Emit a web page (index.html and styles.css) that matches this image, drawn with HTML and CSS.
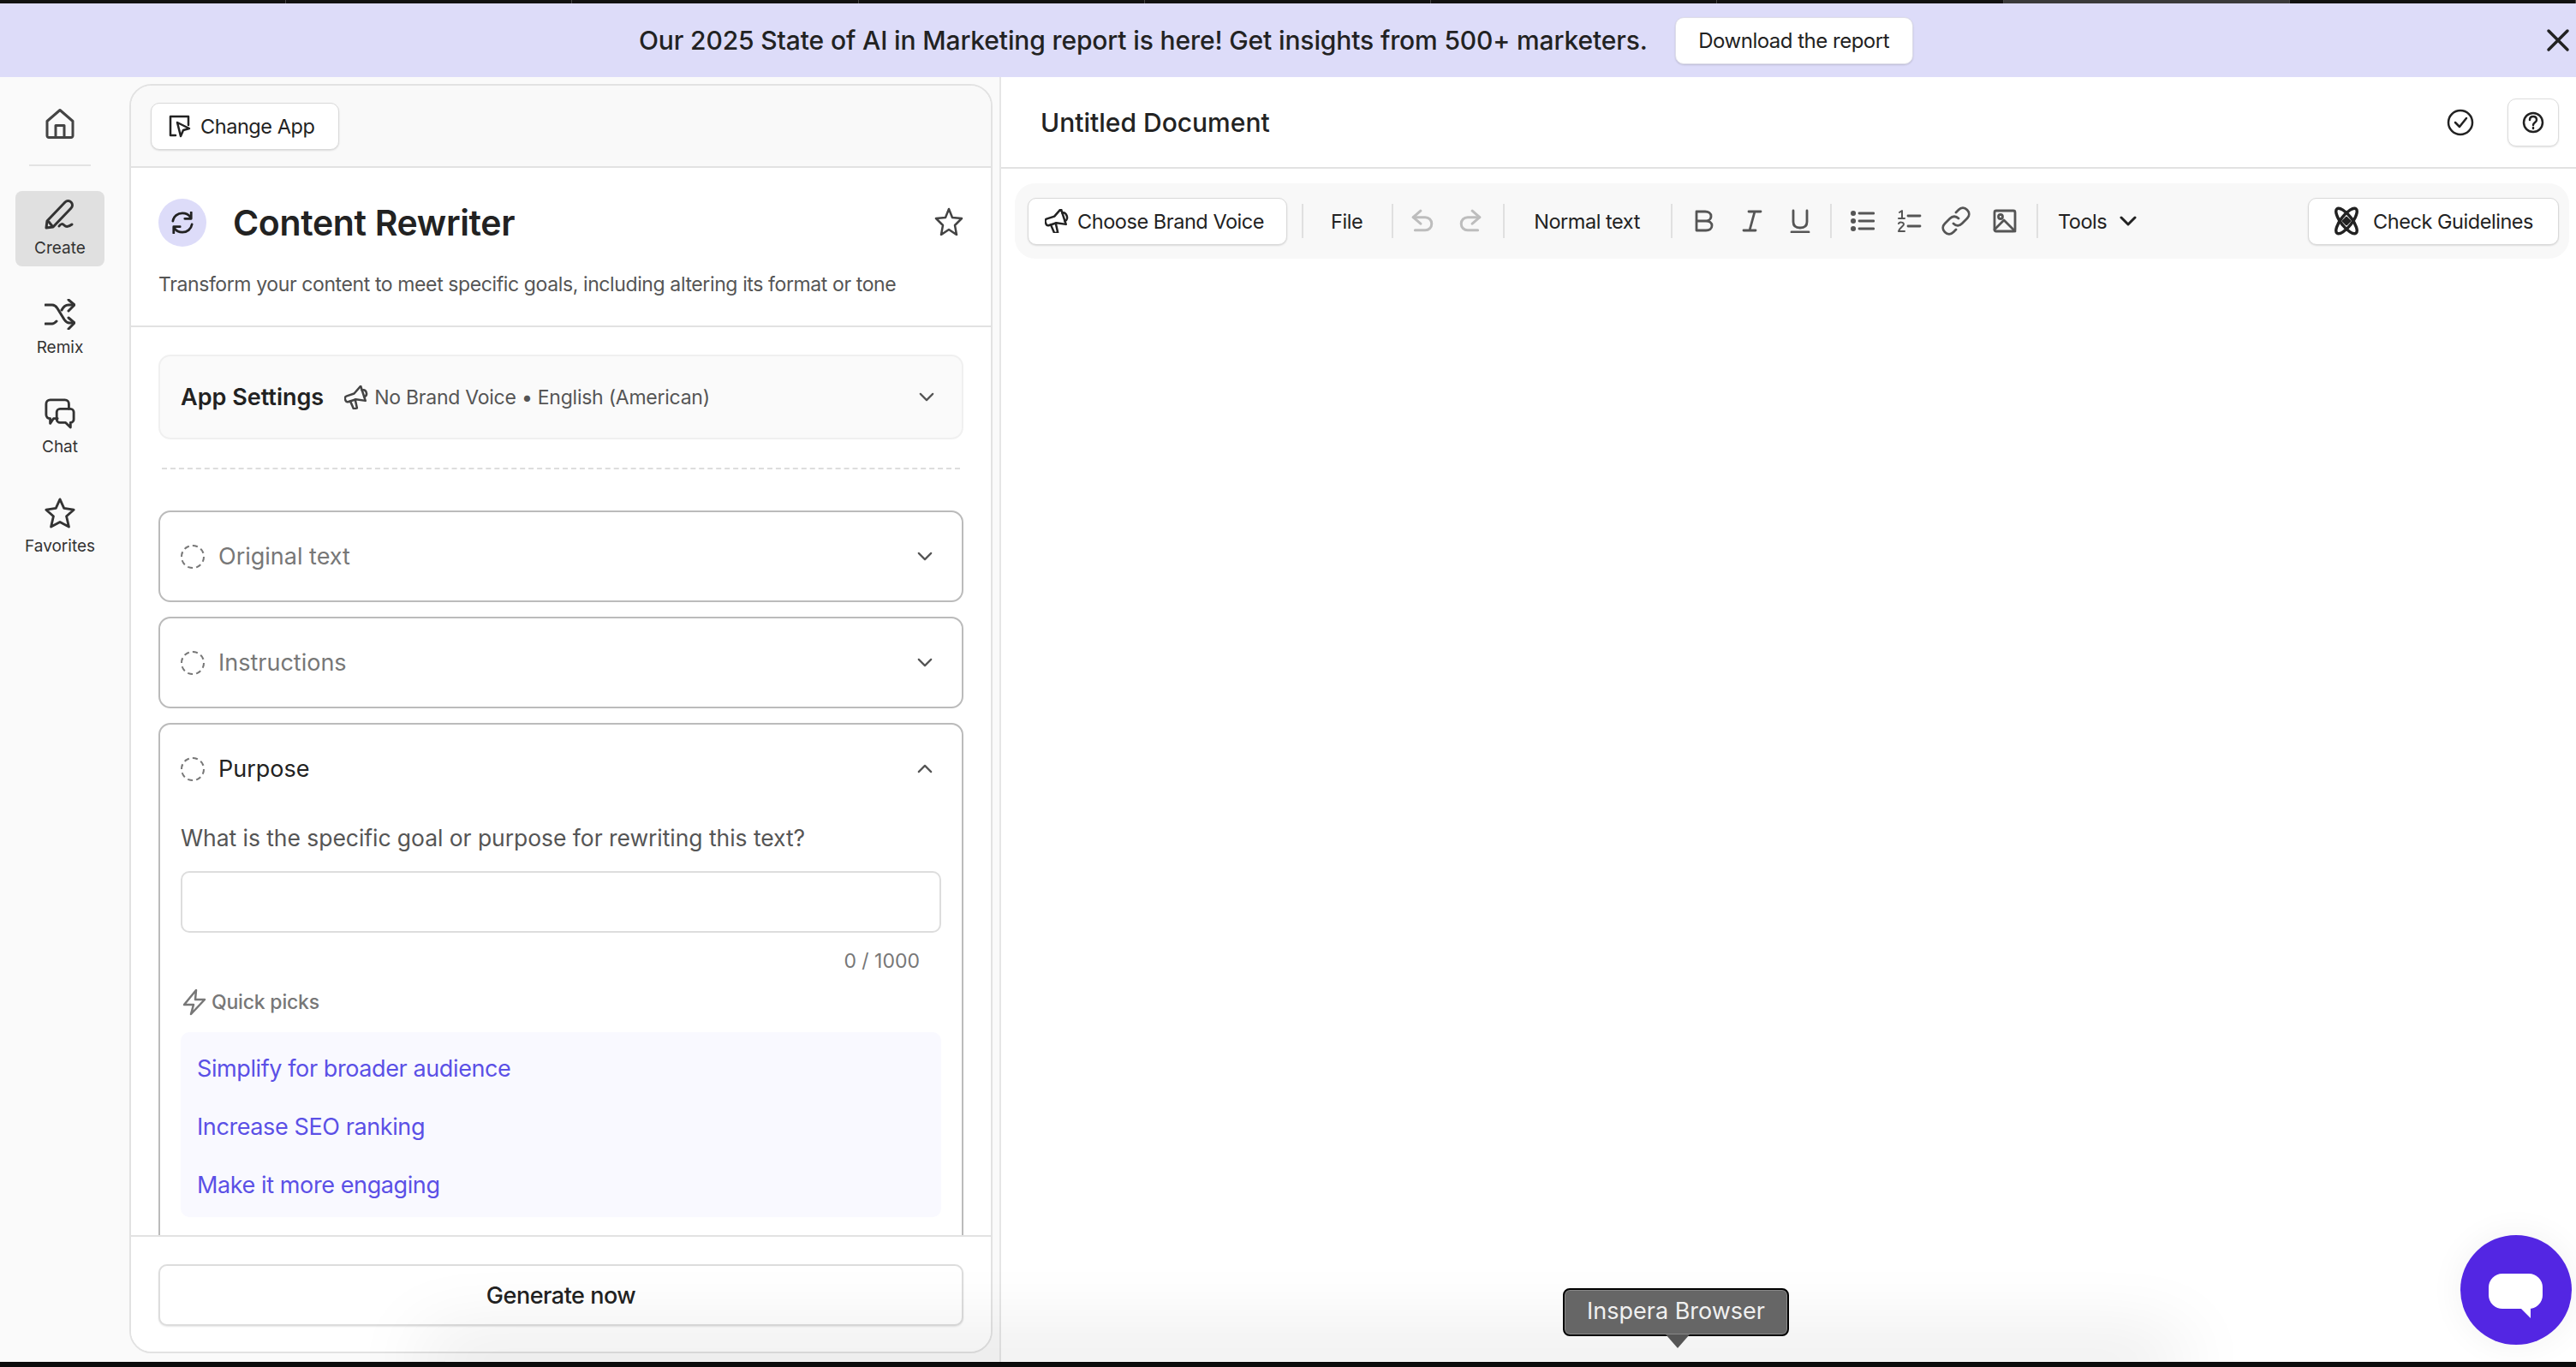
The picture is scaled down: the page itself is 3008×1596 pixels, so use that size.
FILE: index.html
```html
<!DOCTYPE html>
<html lang="en">
<head>
    <meta charset="UTF-8">
    <title>Content Rewriter</title>
    <link rel="stylesheet" href="styles.css">
</head>
<body>
    <div class="tabstrip">
        <span></span><span></span><span></span><span></span><span></span><span></span><span></span><span class="active"></span><span></span>
    </div>

    <div class="banner">
        <span class="banner-text">Our 2025 State of AI in Marketing report is here! Get insights from 500+ marketers.</span>
        <button class="banner-btn">Download the report</button>
        <svg class="banner-close" viewBox="0 0 28 28"><path d="M3 3l22 22M25 3L3 25"/></svg>
    </div>

    <div class="main">
        <!-- Left nav -->
        <nav class="sidebar">
            <svg class="nav-home" viewBox="0 0 34 36"><path d="M2 15L17 2l15 13v17c0 1-1 2-2 2H4c-1 0-2-1-2-2z"/><path d="M12 34V20h10v14"/></svg>
            <div class="nav-line"></div>
            <div class="nav-item selected">
                <svg viewBox="0 0 36 36"><path d="M2 33l1-8L24 3c2-2 5-2 7 0s2 5 0 7L10 32z"/><path d="M5 26l4 5"/><path d="M17 31c2-3 4-3 6-1s5 2 9-1"/></svg>
                <span>Create</span>
            </div>
            <div class="nav-item">
                <svg viewBox="0 0 36 36"><path d="M1 7h8c3 0 4 1 6 4l8 13c2 3 3 4 6 4h5"/><path d="M1 29h8c2 0 3-1 5-3M20 13c2-4 4-6 8-6h6"/><path d="M28 1l7 6-7 7M28 22l7 6-7 7"/></svg>
                <span>Remix</span>
            </div>
            <div class="nav-item">
                <svg viewBox="0 0 38 38"><path d="M16 25H11l-4 6v-6c-3 0-5-2-5-5V7c0-3 2-5 5-5h18c3 0 5 2 5 5v6"/><path d="M19 13h13c2 0 4 2 4 4v9c0 2-2 4-4 4v6l-6-6h-7c-2 0-4-2-4-4v-9c0-2 2-4 4-4z"/></svg>
                <span>Chat</span>
            </div>
            <div class="nav-item">
                <svg viewBox="0 0 38 38"><path d="M19 2l5 11 12 2-9 8 3 13-11-6-11 6 3-13-9-8 12-2z"/></svg>
                <span>Favorites</span>
            </div>
        </nav>

        <!-- App panel -->
        <section class="panel">
            <div class="panel-top">
                <button class="white-btn change-btn">
                    <svg class="icon" viewBox="0 0 28 28"><path d="M9 25H3V3h21v10"/><path d="M11 10l14 7-7 2-3 7z"/></svg>
                    Change App
                </button>
            </div>
            <div class="app-head">
                <div class="title-row">
                    <div class="app-icon">
                        <svg viewBox="0 0 28 28"><path d="M2 12C3 6 8 2 14 2c5 0 8 2 10 5"/><path d="M26 16c-1 6-6 10-12 10-5 0-8-2-10-5"/><path d="M25 1v8h-8M3 27v-8h8"/></svg>
                    </div>
                    <h1>Content Rewriter</h1>
                    <svg class="star" viewBox="0 0 34 34"><path d="M17 3l4 10 11 1-8 8 2 11-9-6-9 6 2-11-8-8 11-1z"/></svg>
                </div>
                <p class="app-desc">Transform your content to meet specific goals, including altering its format or tone</p>
            </div>
            <div class="panel-scroll">
                <div class="settings">
                    <b>App Settings</b>
                    <svg class="icon mega" viewBox="0 0 28 28"><g transform="rotate(-18 14 14)"><path d="M4 9h9l10-6v18l-10-5H4c-2 0-3-1-3-3v-1c0-2 1-3 3-3z"/><path d="M6 16l1 10h4l1-10M23 8c3 0 4 2 4 4s-1 4-4 4"/></g></svg>
                    <span class="settings-meta">No Brand Voice • English (American)</span>
                    <svg class="chev" viewBox="0 0 20 12"><path d="M2 2l8 8 8-8"/></svg>
                </div>
                <div class="dashed"></div>

                <div class="card">
                    <div class="card-head muted">
                        <span class="ring"></span>
                        <span class="card-title">Original text</span>
                        <svg class="chev" viewBox="0 0 20 12"><path d="M2 2l8 8 8-8"/></svg>
                    </div>
                </div>
                <div class="card">
                    <div class="card-head muted">
                        <span class="ring"></span>
                        <span class="card-title">Instructions</span>
                        <svg class="chev" viewBox="0 0 20 12"><path d="M2 2l8 8 8-8"/></svg>
                    </div>
                </div>
                <div class="card open">
                    <div class="card-head">
                        <span class="ring"></span>
                        <span class="card-title">Purpose</span>
                        <svg class="chev" viewBox="0 0 20 12"><path d="M2 10l8-8 8 8"/></svg>
                    </div>
                    <div class="question">What is the specific goal or purpose for rewriting this text?</div>
                    <input class="answer" type="text">
                    <div class="counter">0 / 1000</div>
                    <div class="quick-label">
                        <svg viewBox="0 0 28 32"><path d="M16 2L2 19h11l-3 11 16-17H15z"/></svg>
                        Quick picks
                    </div>
                    <div class="picks">
                        <a>Simplify for broader audience</a>
                        <a>Increase SEO ranking</a>
                        <a>Make it more engaging</a>
                    </div>
                </div>
            </div>
            <div class="panel-foot">
                <button class="generate">Generate now</button>
            </div>
        </section>

        <!-- Document -->
        <section class="doc">
            <header class="doc-head">
                <span class="doc-title">Untitled Document</span>
                <svg class="doc-check" viewBox="0 0 32 32"><circle cx="16" cy="16" r="14"/><path d="M10 16l5 5 8-10"/></svg>
                <button class="help-btn">
                    <svg viewBox="0 0 26 26"><circle cx="13" cy="13" r="11"/><path d="M9 10c0-3 2-4 4-4s4 1 4 4c0 3-4 3-4 6"/><path d="M13 19v1"/></svg>
                </button>
            </header>
            <div class="toolbar">
                <button class="white-btn voice-btn">
                    <svg class="icon" viewBox="0 0 28 28"><g transform="rotate(-18 14 14)"><path d="M4 8h9l10-6v19l-10-5H4c-2 0-3-1-3-3V11c0-2 1-3 3-3z"/><path d="M6 16l1 11h4l1-11M23 7c3 0 4 3 4 5s-1 5-4 5"/></g></svg>
                    Choose Brand Voice
                </button>
                <i class="sep"></i>
                <span class="tool-text file-tool">File</span>
                <i class="sep"></i>
                <svg class="tool-icon faded undo" viewBox="0 0 26 26"><path d="M11 2L3 9l8 7"/><path d="M3 9h13c4 0 7 3 7 7s-3 7-7 7H5"/></svg>
                <svg class="tool-icon faded redo" viewBox="0 0 26 26"><path d="M15 2l8 7-8 7"/><path d="M23 9H10c-4 0-7 3-7 7s3 7 7 7h11"/></svg>
                <i class="sep"></i>
                <span class="tool-text normal-tool">Normal text</span>
                <i class="sep"></i>
                <svg class="tool-icon b" viewBox="0 0 28 28"><path d="M5 3h10c4 0 7 2 7 5.500S19 14 15 14H5zM5 14h11c4 0 7 2 7 5.500S20 25 16 25H5z"/></svg>
                <svg class="tool-icon i" viewBox="0 0 28 28"><path d="M10 3h14M4 25h14M17 3l-6 22"/></svg>
                <svg class="tool-icon u" viewBox="0 0 28 28"><path d="M6 2v13c0 5 3 7 8 7s8-2 8-7V2M4 27h20"/></svg>
                <i class="sep sep-u"></i>
                <svg class="tool-icon ul" viewBox="0 0 28 28"><path d="M10 5h17M10 14h17M10 23h17"/><path class="dots" d="M3 5h.1M3 14h.1M3 23h.1"/></svg>
                <svg class="tool-icon ol" viewBox="0 0 28 28"><path d="M12 8h14M12 20h14"/><path class="thin" d="M2 4l3-2v9M1 11h7M1 17c1-2 6-2 6 1 0 2-5 4-6 8h7"/></svg>
                <svg class="tool-icon link" viewBox="0 0 34 34"><path d="M14 20c3 3 7 3 10 0l6-6c3-3 3-7 0-10s-7-3-10 0l-3 3"/><path d="M20 14c-3-3-7-3-10 0l-6 6c-3 3-3 7 0 10s7 3 10 0l3-3"/></svg>
                <svg class="tool-icon img" viewBox="0 0 28 28"><rect x="2" y="2" width="24" height="24" rx="2"/><circle cx="9" cy="9" r="2.500"/><path d="M2 24l11-11 13 13"/></svg>
                <i class="sep sep-img"></i>
                <span class="tool-text tools-tool">Tools</span>
                <svg class="tools-chev" viewBox="0 0 20 12"><path d="M2 2l8 8 8-8"/></svg>
                <button class="white-btn check-btn">
                    <svg class="icon atom" viewBox="0 0 30 34"><ellipse cx="15" cy="17" rx="6.500" ry="18" transform="rotate(38 15 17)"/><ellipse cx="15" cy="17" rx="6.500" ry="18" transform="rotate(-38 15 17)"/><path class="gem" d="M15 13l4 4-4 4-4-4z"/></svg>
                    Check Guidelines
                </button>
            </div>
        </section>
    </div>

    <div class="bottom-strip"></div>

    <div class="dock-shadow"></div>
    <div class="dock-tip">Inspera Browser</div>
    <div class="chat-fab"><span class="chat-bubble"></span></div>
</body>
</html>
```

FILE: styles.css
```css
* {
    box-sizing: border-box;
}
html, body {
    margin: 0;
    height: 100%;
}
body {
    position: relative;
    display: flex;
    flex-direction: column;
    width: 3008px;
    height: 1596px;
    overflow: hidden;
    font-family: Inter, "Liberation Sans", sans-serif;
    color: #222;
    background: #fafafa;
}
button {
    font-family: inherit;
    color: inherit;
    cursor: pointer;
}
svg {
    fill: none;
    stroke: currentColor;
    stroke-width: 2.5;
    stroke-linecap: round;
    stroke-linejoin: round;
    flex: none;
}

.tabstrip {
    display: flex;
    height: 4px;
    background: #111;
    flex: none;
    position: relative;
    z-index: 3;
}
.tabstrip span {
    width: 336px;
    border-right: 1px solid #444;
}
.tabstrip .active {
    background: #3a3a3a;
}

.banner {
    display: flex;
    align-items: center;
    height: 86px;
    flex: none;
    padding-left: 746px;
    background: #dddcf9;
}
.banner-text {
    font-size: 30px;
    font-weight: 500;
    letter-spacing: -.13px;
    white-space: nowrap;
}
.banner-btn {
    width: 278px;
    height: 55px;
    margin-left: 32px;
    border: 1px solid #dedee8;
    border-radius: 10px;
    background: #fff;
    font-size: 24px;
    letter-spacing: -.5px;
    box-shadow: 0 1px 2px rgba(0, 0, 0, .15);
}
.banner-close {
    width: 28px;
    height: 28px;
    margin-left: auto;
    margin-right: 7px;
    stroke-width: 3.5;
}

.main {
    display: flex;
    flex: 1;
    min-height: 0;
}

.sidebar {
    display: flex;
    flex-direction: column;
    align-items: center;
    width: 151px;
    flex: none;
    padding-top: 36px;
    padding-right: 11px;
}
.nav-home {
    width: 34px;
    height: 37px;
    color: #444;
    stroke-width: 3;
}
.nav-line {
    width: 72px;
    height: 2px;
    margin: 29px 0 29px;
    background: #e3e3e3;
}
.nav-item {
    display: flex;
    flex-direction: column;
    align-items: center;
    justify-content: center;
    width: 104px;
    height: 88px;
    margin-bottom: 28px;
    border-radius: 8px;
    font-size: 19px;
    color: #333;
    gap: 9px;
}
.nav-item svg {
    width: 36px;
    height: 36px;
    stroke-width: 3;
}
.nav-item.selected {
    background: #e0e0e0;
}

.panel {
    display: flex;
    flex-direction: column;
    width: 1008px;
    flex: none;
    margin: 8px 0 10px;
    border: 2px solid #e2e2e2;
    border-radius: 26px;
    background: #fff;
    overflow: hidden;
}
.panel-top {
    display: flex;
    align-items: center;
    height: 96px;
    flex: none;
    padding-left: 23px;
    background: #f9f9f9;
    border-bottom: 2px solid #e2e2e2;
}
.white-btn {
    display: flex;
    align-items: center;
    height: 55px;
    border: 1px solid #d9d9d9;
    border-radius: 10px;
    background: #fff;
    font-size: 23.500px;
    letter-spacing: -.45px;
    white-space: nowrap;
    box-shadow: 0 1px 2px rgba(0, 0, 0, .12);
}
.icon {
    width: 28px;
    height: 28px;
}
.change-btn {
    width: 220px;
    padding-left: 19px;
    gap: 10px;
}

.app-head {
    height: 186px;
    flex: none;
    padding: 36px 32px 0;
    border-bottom: 2px solid #e2e2e2;
}
.title-row {
    display: flex;
    align-items: center;
}
.app-icon {
    display: flex;
    align-items: center;
    justify-content: center;
    width: 56px;
    height: 56px;
    border-radius: 50%;
    background: #dddcf9;
}
.app-icon svg {
    width: 26px;
    height: 26px;
    stroke-width: 3;
}
h1 {
    margin: 0 0 0 31px;
    font-size: 41px;
    font-weight: 600;
    letter-spacing: -.35px;
}
.star {
    width: 34px;
    height: 34px;
    margin-left: auto;
    color: #444;
    position: relative;
    top: -2px;
}
.app-desc {
    margin: 30px 0 0;
    font-size: 23px;
    letter-spacing: -.39px;
    color: #555;
    white-space: nowrap;
}

.panel-scroll {
    flex: 1;
    min-height: 0;
    padding: 32px 32px 0;
    overflow: hidden;
}
.settings {
    display: flex;
    align-items: center;
    height: 99px;
    padding: 0 32px 0 24px;
    border: 2px solid #f0f0f0;
    border-radius: 14px;
    background: #fafafa;
}
.settings b {
    font-size: 27px;
    font-weight: 600;
}
.mega {
    margin-left: 24px;
    color: #444;
}
.settings-meta {
    margin-left: 7px;
    font-size: 23px;
    letter-spacing: -.25px;
    color: #555;
}
.chev {
    width: 18px;
    height: 11px;
    margin-left: auto;
    color: #555;
    stroke-width: 2.500;
}
.dashed {
    height: 0;
    margin: 33px 4px 48px;
    border-top: 2px dashed #ddd;
}

.card {
    height: 107px;
    margin-bottom: 17px;
    padding: 0 24px;
    border: 2px solid #bbb;
    border-radius: 14px;
}
.card.open {
    height: 640px;
    margin-bottom: 0;
}
.card-head {
    display: flex;
    align-items: center;
    height: 103px;
    padding-right: 10px;
    font-size: 27px;
    color: #222;
}
.card-head.muted {
    color: #777;
}
.ring {
    width: 28px;
    height: 28px;
    border: 2px dashed #777;
    border-radius: 50%;
    margin-right: 16px;
}
.question {
    margin-top: 13px;
    font-size: 26.500px;
    letter-spacing: -.05px;
    color: #555;
    white-space: nowrap;
}
.answer {
    display: block;
    width: 888px;
    height: 72px;
    margin-top: 23px;
    border: 2px solid #ddd;
    border-radius: 10px;
    background: #fff;
}
.counter {
    margin: 19px 25px 0 0;
    text-align: right;
    font-size: 23px;
    color: #777;
}
.quick-label {
    display: flex;
    align-items: center;
    gap: 6px;
    margin-top: 18px;
    margin-left: 2px;
    font-size: 23px;
    font-weight: 500;
    letter-spacing: -.2px;
    color: #777;
}
.quick-label svg {
    width: 28px;
    height: 32px;
    stroke-width: 2.500;
}
.picks {
    display: flex;
    flex-direction: column;
    justify-content: space-around;
    height: 216px;
    margin-top: 19px;
    padding: 8px 19px 4px;
    border-radius: 10px;
    background: #f9f9ff;
    font-size: 27px;
    letter-spacing: -.4px;
    color: #5b50e6;
}

.panel-foot {
    height: 136px;
    flex: none;
    padding: 32px 32px 0;
    border-top: 2px solid #e2e2e2;
    background: #fff;
}
.generate {
    width: 100%;
    height: 72px;
    border: 2px solid #ddd;
    border-radius: 10px;
    background: #fff;
    font-size: 27px;
    font-weight: 500;
    letter-spacing: -.5px;
    box-shadow: 0 1px 2px rgba(0, 0, 0, .1);
}

.doc {
    flex: 1;
    margin-left: 8px;
    background: #fff;
    border-left: 2px solid #e6e6e6;
}
.doc-head {
    display: flex;
    align-items: center;
    height: 107px;
    padding: 0 20px 0 46px;
    border-bottom: 2px solid #e2e2e2;
}
.doc-title {
    font-size: 30px;
    font-weight: 500;
}
.doc-check {
    width: 32px;
    height: 32px;
    margin-left: auto;
    margin-right: 39px;
}
.help-btn {
    display: flex;
    align-items: center;
    justify-content: center;
    width: 60px;
    height: 56px;
    padding: 0;
    border: 1px solid #ddd;
    border-radius: 10px;
    background: #fff;
    box-shadow: 0 1px 2px rgba(0, 0, 0, .12);
}
.help-btn svg {
    width: 26px;
    height: 26px;
}

.toolbar {
    display: flex;
    align-items: center;
    height: 88px;
    margin: 17px 8px 0 16px;
    padding: 0 12px 0 15px;
    border-radius: 24px;
    background: #f8f8f8;
}
.voice-btn {
    width: 303px;
    padding-left: 19px;
    gap: 10px;
}
.sep {
    width: 2px;
    height: 40px;
    margin-left: 17px;
    background: #e0e0e0;
}
.tool-text {
    font-size: 23.500px;
    letter-spacing: -.45px;
    white-space: nowrap;
}
.file-tool {
    margin-left: 32px;
    margin-right: 17px;
}
.tool-icon {
    width: 28px;
    height: 28px;
    color: #555;
    stroke-width: 2.800;
}
.faded {
    color: #bdbdbd;
}
.undo {
    margin-left: 20px;
}
.redo {
    margin-left: 28px;
    margin-right: 7px;
}
.normal-tool {
    margin-left: 34px;
    margin-right: 19px;
}
.b {
    margin-left: 23px;
}
.i {
    margin-left: 28px;
}
.u {
    margin-left: 28px;
}
.sep-u {
    margin-left: 21px;
}
.ul {
    margin-left: 22px;
}
.ol {
    margin-left: 27px;
}
.link {
    width: 34px;
    height: 34px;
    margin-left: 23px;
}
.img {
    margin-left: 26px;
}
.sep-img {
    margin-left: 23px;
}
.dots {
    stroke-width: 6;
}
.thin {
    stroke-width: 2;
}
.tools-tool {
    margin-left: 23px;
}
.tools-chev {
    width: 20px;
    height: 12px;
    margin-left: 15px;
    stroke-width: 3;
}
.check-btn {
    width: 293px;
    margin-left: auto;
    padding-left: 29px;
    gap: 16px;
}
.atom {
    width: 30px;
    height: 34px;
    stroke-width: 3.500;
}
.gem {
    stroke-width: 2.500;
    fill: #222;
}

.bottom-strip {
    height: 6px;
    flex: none;
    background: #0c0c0c;
    position: relative;
    z-index: 3;
}

/* things that sit on top of the page */
.dock-shadow {
    position: absolute;
    left: 520px;
    bottom: 6px;
    width: 2000px;
    height: 1px;
    box-shadow: 0 0 90px 26px rgba(0, 0, 0, .11);
    pointer-events: none;
}
.dock-tip {
    position: absolute;
    left: 1825px;
    top: 1504px;
    width: 264px;
    height: 56px;
    border: 2px solid #000;
    border-radius: 8px;
    background: #666;
    color: #f0f0f0;
    font-size: 27px;
    line-height: 50px;
    text-align: center;
    box-shadow: inset 0 0 0 1px #888;
}
.dock-tip::after {
    content: "";
    position: absolute;
    left: 118px;
    top: 52px;
    border-style: solid;
    border-width: 16px 14px 0;
    border-color: #555 transparent transparent;
}
.chat-fab {
    position: absolute;
    left: 2873px;
    top: 1442px;
    width: 130px;
    height: 128px;
    border-radius: 50%;
    background: #5326e3;
    box-shadow: 0 0 40px rgba(0, 0, 0, .06);
}
.chat-bubble {
    position: absolute;
    left: 33px;
    top: 45px;
    width: 63px;
    height: 41px;
    border-radius: 16px;
    background: #fff;
}
.chat-bubble::after {
    content: "";
    position: absolute;
    left: 37px;
    top: 40px;
    border-style: solid;
    border-width: 12px 0 0 12px;
    border-color: #fff transparent transparent;
}
```
